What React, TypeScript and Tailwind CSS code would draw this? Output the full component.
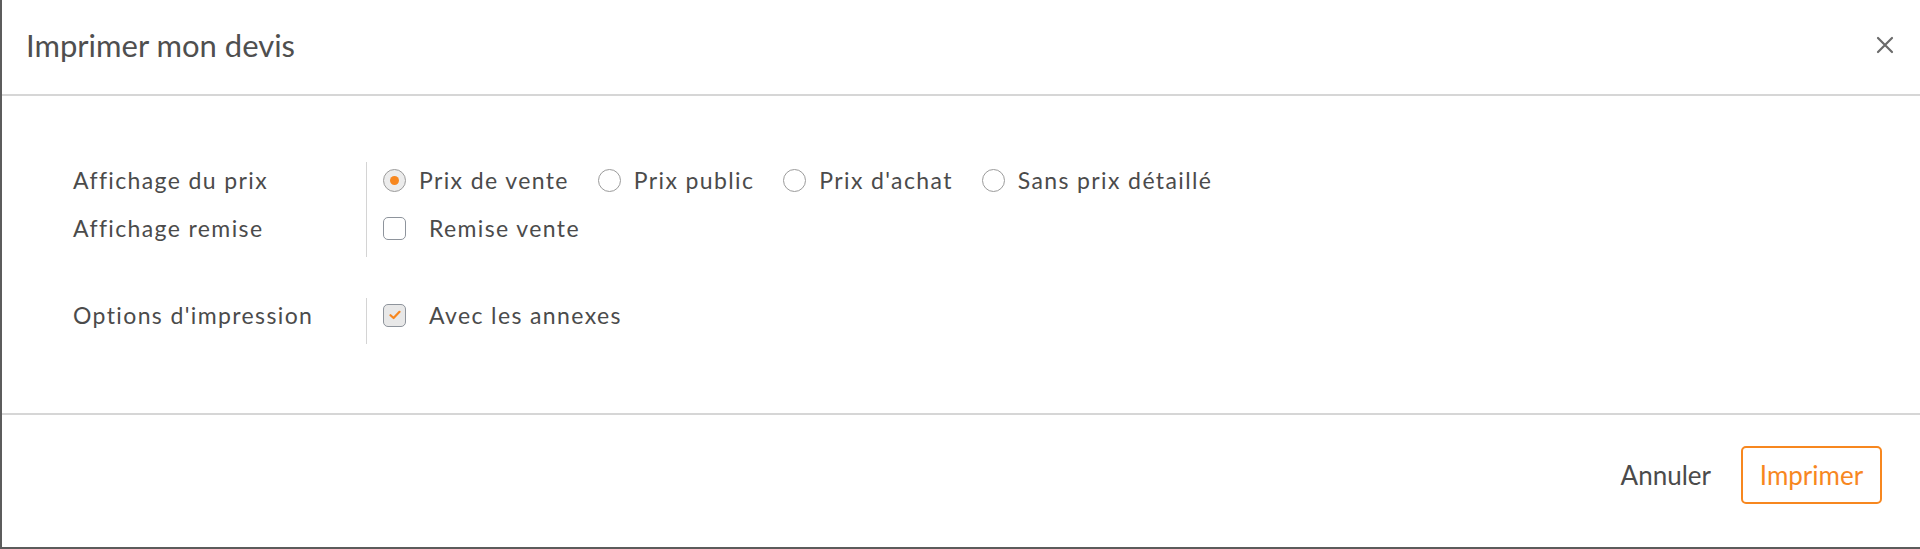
import React from "react";

const lato = { fontFamily: "Lato, 'Noto Sans', sans-serif" };

function Radio({ checked, label }: { checked?: boolean; label: string }) {
  return (
    <label className="flex items-center gap-[13px]">
      <span
        className={
          checked
            ? "flex h-[23px] w-[23px] items-center justify-center rounded-full border-[1.5px] border-[#9b9b9b] bg-[#ececec]"
            : "flex h-[23px] w-[23px] items-center justify-center rounded-full border-[1.5px] border-[#9b9b9b] bg-white"
        }
      >
        {checked && <span className="h-[9px] w-[9px] rounded-full bg-[#f7871f]" />}
      </span>
      <span>{label}</span>
    </label>
  );
}

function Checkbox({ checked, label }: { checked?: boolean; label: string }) {
  return (
    <label className="flex items-center gap-[23px]">
      <span
        className={
          checked
            ? "flex h-[23px] w-[23px] items-center justify-center rounded-[5px] border-[1.5px] border-[#8e949c] bg-[#e8e8e8]"
            : "flex h-[23px] w-[23px] items-center justify-center rounded-[5px] border-[1.5px] border-[#8e949c] bg-white"
        }
      >
        {checked && (
          <svg width="12" height="10" viewBox="0 0 12 10" fill="none">
            <path d="M1.5 5.2 4.6 8 10.5 1.8" stroke="#f7871f" strokeWidth="2.2" strokeLinecap="round" strokeLinejoin="round" />
          </svg>
        )}
      </span>
      <span>{label}</span>
    </label>
  );
}

export default function App() {
  return (
    <div
      className="flex h-[549px] w-[1920px] flex-col border-b-2 border-l-2 border-[#5c5c5c] bg-white text-[#4b4b4b]"
      style={lato}
    >
      <header className="flex h-[96px] shrink-0 items-center justify-between border-b-2 border-[#d6d6d6] pb-1 pl-6 pr-[26px]">
        <h1 className="text-[31px] font-normal text-[#4f4f4f]">Imprimer mon devis</h1>
        <button className="flex h-[18px] w-[18px] items-center justify-center text-[#6b6b6b]">
          <svg width="18" height="18" viewBox="0 0 18 18">
            <path d="M2 2 16 16M16 2 2 16" stroke="currentColor" strokeWidth="2.2" strokeLinecap="round" />
          </svg>
        </button>
      </header>

      <main className="flex flex-1 flex-col gap-[41px] pl-[71px] pt-[66px] text-[23px] tracking-[0.06em]">
        <section className="flex">
          <div className="flex w-[293px] flex-col gap-[12px]">
            <div className="flex h-[36px] items-center">Affichage du prix</div>
            <div className="flex h-[36px] items-center">Affichage remise</div>
          </div>
          <div className="flex flex-col gap-[12px] border-l border-[#d4d4d4] pb-[11px] pl-4">
            <div className="flex h-[36px] items-center gap-[29px]">
              <Radio checked label="Prix de vente" />
              <Radio label="Prix public" />
              <Radio label="Prix d'achat" />
              <Radio label="Sans prix détaillé" />
            </div>
            <div className="flex h-[36px] items-center">
              <Checkbox label="Remise vente" />
            </div>
          </div>
        </section>

        <section className="flex">
          <div className="flex w-[293px] flex-col">
            <div className="flex h-[34px] items-center">Options d'impression</div>
          </div>
          <div className="flex flex-col border-l border-[#d4d4d4] pb-[12px] pl-4">
            <div className="flex h-[34px] items-center">
              <Checkbox checked label="Avec les annexes" />
            </div>
          </div>
        </section>
      </main>

      <footer className="flex h-[134px] shrink-0 items-start justify-end gap-[30px] border-t-2 border-[#d6d6d6] pr-[38px] pt-[31px] text-[26px]">
        <button className="flex h-[58px] items-center text-[#4b4b4b]">Annuler</button>
        <button className="flex h-[58px] w-[141px] items-center justify-center rounded-[5px] border-2 border-[#f7871f] text-[#f7871f]">
          Imprimer
        </button>
      </footer>
    </div>
  );
}
